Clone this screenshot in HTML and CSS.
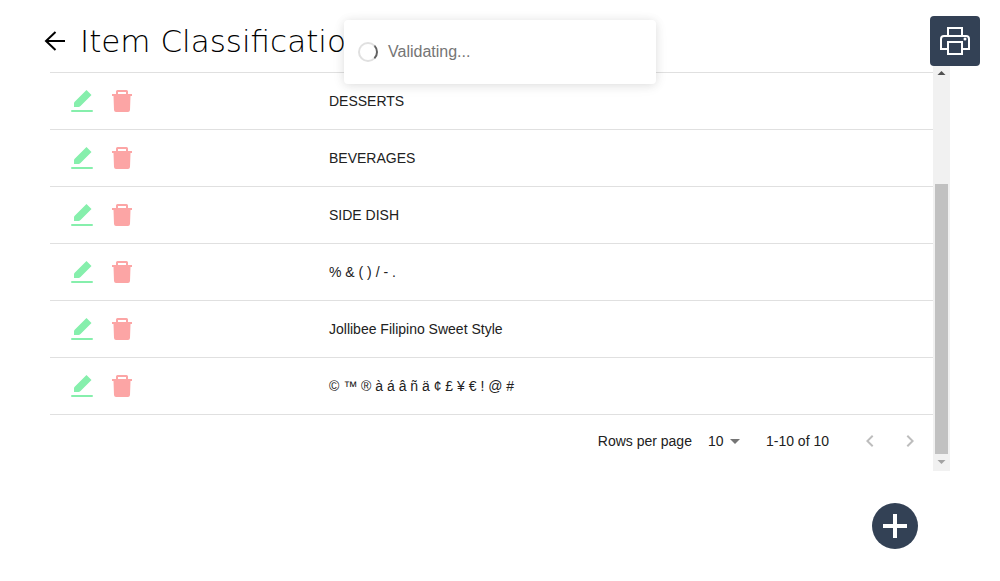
FILE: index.html
```html
<!DOCTYPE html>
<html lang="en">
<head>
<meta charset="utf-8">
<title>Item Classification</title>
<link rel="stylesheet" href="styles.css">
</head>
<body>
<svg class="sprite" aria-hidden="true">
  <symbol id="pen" viewBox="0 0 24 24"><path d="M2 21h20q1 0 1 1t-1 1H2q-1 0-1-1t1-1zM16.500 1l5 5L10.500 17Q9.500 18 8.500 18H4v-3.500q0-1 .7-1.700z"/></symbol>
  <symbol id="bin" viewBox="0 0 24 24"><path fill-rule="evenodd" d="M7.500 1h9Q18 1 18 2.500V5h4v2h-1.500L20 21q-.2 2-2 2H6q-1.800 0-2-2L3.500 7H2V5h4V2.500Q6 1 7.500 1zM8 3v2h8V3z"/></symbol>
</svg>
<header class="header">
  <button class="icon-btn back" aria-label="Back">
    <svg viewBox="0 0 22 22" width="22" height="22"><path d="M11.500 2L2 11l9.500 9M2 11h19" fill="none" stroke="#000" stroke-width="2"/></svg>
  </button>
  <h1 class="title">Item Classification</h1>
  <button class="print" aria-label="Print">
    <svg viewBox="0 0 32 32" width="32" height="32" fill="none" stroke="#fff" stroke-width="2"><path d="M9 10V3h14v7M9 24H2V14q0-3 3-3h22q3 0 3 3v10h-7M9 17h14v12H9z"/><circle cx="26" cy="14" r="1.500" fill="#fff" stroke="none"/></svg>
  </button>
</header>
<main class="panel">
  <div class="content">
    <table class="table">
      <tbody>
        <tr><td class="actions"><button class="icon-btn edit" aria-label="Edit"><svg><use href="#pen"/></svg></button><button class="icon-btn remove" aria-label="Delete"><svg><use href="#bin"/></svg></button></td><td>DESSERTS</td></tr>
        <tr><td class="actions"><button class="icon-btn edit" aria-label="Edit"><svg><use href="#pen"/></svg></button><button class="icon-btn remove" aria-label="Delete"><svg><use href="#bin"/></svg></button></td><td>BEVERAGES</td></tr>
        <tr><td class="actions"><button class="icon-btn edit" aria-label="Edit"><svg><use href="#pen"/></svg></button><button class="icon-btn remove" aria-label="Delete"><svg><use href="#bin"/></svg></button></td><td>SIDE DISH</td></tr>
        <tr><td class="actions"><button class="icon-btn edit" aria-label="Edit"><svg><use href="#pen"/></svg></button><button class="icon-btn remove" aria-label="Delete"><svg><use href="#bin"/></svg></button></td><td>% &amp; ( ) / - .</td></tr>
        <tr><td class="actions"><button class="icon-btn edit" aria-label="Edit"><svg><use href="#pen"/></svg></button><button class="icon-btn remove" aria-label="Delete"><svg><use href="#bin"/></svg></button></td><td>Jollibee Filipino Sweet Style</td></tr>
        <tr><td class="actions"><button class="icon-btn edit" aria-label="Edit"><svg><use href="#pen"/></svg></button><button class="icon-btn remove" aria-label="Delete"><svg><use href="#bin"/></svg></button></td><td>© ™ ® à á â ñ ä ¢ £ ¥ € ! @ #</td></tr>
      </tbody>
    </table>
    <div class="pager">
      <label for="rows">Rows per page</label>
      <span class="select">
        <select id="rows"><option>10</option><option>25</option></select>
        <svg viewBox="0 0 10 5" width="10" height="5"><path d="M0 0h10L5 5z" fill="#757575"/></svg>
      </span>
      <span class="range">1-10 of 10</span>
      <div class="pages">
        <button class="icon-btn" aria-label="Previous page" disabled><svg viewBox="0 0 24 24"><path d="M15.400 7.400L14 6l-6 6 6 6 1.400-1.400L10.800 12z" fill="#bdbdbd"/></svg></button>
        <button class="icon-btn" aria-label="Next page" disabled><svg viewBox="0 0 24 24"><path d="M10 6L8.600 7.400l4.600 4.600-4.600 4.600L10 18l6-6z" fill="#bdbdbd"/></svg></button>
      </div>
    </div>
  </div>
  <div class="scrollbar" aria-hidden="true">
    <svg viewBox="0 0 17 15" width="17" height="15"><path d="M4.500 9L8.500 5l4 4z" fill="#505050"/></svg>
    <div class="track"><div class="thumb"></div></div>
    <svg viewBox="0 0 17 17" width="17" height="17"><path d="M4.500 6h8l-4 4z" fill="#a3a3a3"/></svg>
  </div>
</main>
<footer class="footer">
  <button class="add" aria-label="Add"><svg viewBox="0 0 24 24" width="24" height="24"><path d="M12 0v24M0 12h24" stroke="#fff" stroke-width="4"/></svg></button>
</footer>
<div class="toast" role="status"><span class="spinner"></span>Validating...</div>
</body>
</html>
```
FILE: styles.css
```css
* { box-sizing: border-box; }
body { margin: 0; background: #fff; color: #212121; font: 14px/20px "Liberation Sans", Arial, sans-serif; }
button { border: 0; padding: 0; cursor: pointer; }
.sprite { display: none; }
.icon-btn { display: inline-flex; background: none; }
.icon-btn svg { width: 24px; height: 24px; fill: currentColor; }
.header { display: flex; align-items: center; padding: 16px 20px 0 44px; }
.back svg { width: 22px; height: 22px; }
.title { flex: 1; margin: 0 0 0 14px; font: 200 31px/40px "DejaVu Sans", "DejaVu Sans Light", sans-serif; color: #000; }
.print { display: grid; place-items: center; width: 50px; height: 50px; border-radius: 4px; background: #334155; }
.panel { display: flex; margin: 0 50px; }
.content { flex: 1; padding-top: 6px; }
.table { width: 100%; border-collapse: separate; border-spacing: 0; table-layout: fixed; border-top: 1px solid #e0e0e0; }
.table td { height: 57px; padding: 0 16px; border-bottom: 1px solid #e0e0e0; }
.table .actions { width: 263px; padding: 0 20px; }
.actions .icon-btn { margin-right: 16px; vertical-align: middle; }
.edit { color: #86efac; }
.remove { color: #fca5a5; }
.pager { display: flex; align-items: center; justify-content: flex-end; height: 56px; padding: 0 11px 4px 0; }
.select { display: flex; align-items: center; gap: 6px; margin: 0 26px 0 16px; }
.select select { appearance: none; border: 0; padding: 0; background: none; color: inherit; font: inherit; }
.pages { display: flex; gap: 16px; margin-left: 29px; }
.scrollbar { display: flex; flex-direction: column; width: 17px; background: #f1f1f1; }
.track { display: flex; flex: 1; align-items: flex-end; justify-content: center; }
.thumb { width: 13px; height: 72.4%; background: #c1c1c1; }
.footer { display: flex; justify-content: flex-end; padding: 32px 82px 0 0; }
.add { display: grid; place-items: center; width: 46px; height: 46px; border-radius: 50%; background: #334155; }
.toast { position: absolute; top: 20px; left: 50%; transform: translateX(-50%); display: flex; align-items: center; gap: 10px; width: 312px; height: 64px; padding: 0 14px; border-radius: 4px; background: #fff; color: #757575; font-size: 16px; box-shadow: 0 1px 10px rgba(0, 0, 0, .1), 0 2px 15px rgba(0, 0, 0, .05); }
.spinner { width: 20px; height: 20px; border: 2px solid #e0e0e0; border-right-color: #616161; border-radius: 50%; }
```
